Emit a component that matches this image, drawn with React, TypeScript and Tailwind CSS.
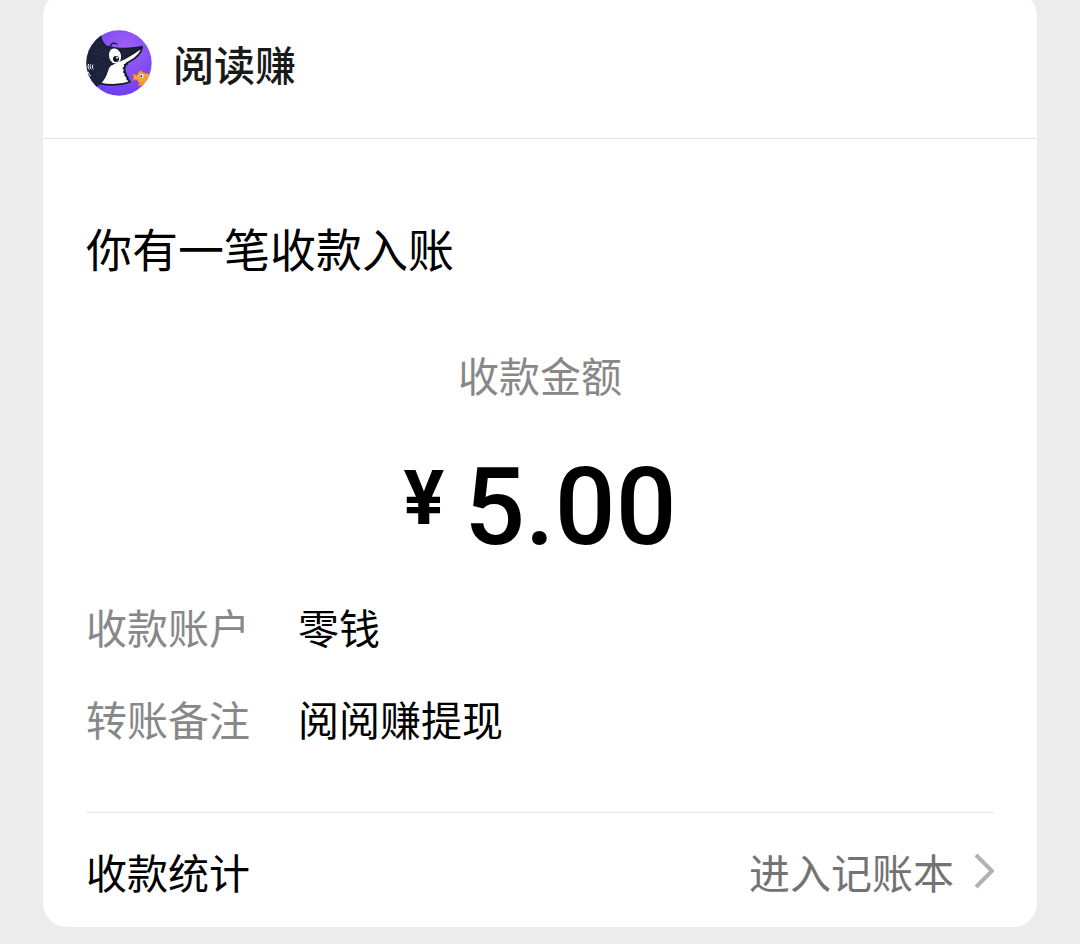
const details = [
  { label: "收款账户", value: "零钱" },
  { label: "转账备注", value: "阅阅赚提现" },
];

function Avatar() {
  return (
    <svg viewBox="24 20 198 198" className="size-[66px] shrink-0" aria-hidden="true">
      <defs>
        <radialGradient id="avatarBg" cx="60%" cy="30%" r="70%">
          <stop offset="0" stopColor="#9f62f4" />
          <stop offset="1" stopColor="#6f3df4" />
        </radialGradient>
        <clipPath id="avatarClip">
          <circle cx="123" cy="119" r="98" />
        </clipPath>
      </defs>
      <g clipPath="url(#avatarClip)">
        <rect x="24" y="20" width="198" height="198" fill="url(#avatarBg)" />
        {/* white face, lip and lower jaw */}
        <path
          d="M64 180C74 160 78 138 94 124C125 116 160 96 192 72C190 90 174 104 156 114C140 122 136 132 140 144C144 158 148 168 156 176C128 186 92 186 64 180Z"
          fill="#fff"
          stroke="#13182b"
          strokeWidth="5"
          strokeLinejoin="round"
        />
        {/* dark head and upper snout */}
        <path
          d="M20 20H66C68 42 72 58 86 68C116 78 156 76 193 69C190 75 184 79 178 82C162 90 144 98 130 108C118 117 106 122 98 126C87 136 88 156 76 170C70 180 62 184 54 190L20 180Z"
          fill="#1b2239"
          stroke="#13182b"
          strokeWidth="3"
          strokeLinejoin="round"
        />
        <path d="M98 70C98 60 106 56 117 62" fill="none" stroke="#13182b" strokeWidth="4" strokeLinecap="round" />
        {/* teeth */}
        <path
          d="M148 116L147 124L140 124L143 131L136 134L141 140L137 146L144 150L141 156L150 161L147 167L156 174"
          fill="none"
          stroke="#13182b"
          strokeWidth="4"
        />
        {/* eye */}
        <ellipse cx="111" cy="98" rx="18" ry="23" fill="#fff" transform="rotate(-14 111 98)" />
        <circle cx="114" cy="107" r="9" fill="#10152a" />
        <circle cx="117" cy="103" r="3" fill="#fff" />
        {/* gills and skin lines */}
        <path
          d="M32 122C29 128 30 134 34 139M38 123C35 128 36 134 40 138M45 124C42 129 43 134 46 138M30 145C32 151 34 155 39 158"
          fill="none"
          stroke="#fff"
          strokeWidth="3"
        />
        <path
          d="M48 78C60 76 72 80 80 90M44 92C58 88 70 94 76 104M54 108C64 104 72 108 78 116M58 158C60 146 68 138 76 136M66 164C68 154 72 148 78 146M70 72C78 76 84 82 88 90"
          fill="none"
          stroke="#323b58"
          strokeWidth="2"
        />
        {/* fish */}
        <path
          d="M163 153C168 152 173 154 177 156C178 150 184 147 187 141C192 145 198 150 207 151L216 152L213 174L203 178C201 184 195 188 180 187C184 183 184 180 181 175C177 169 174 168 162 171C167 166 169 162 163 153Z"
          fill="#f8a23a"
          stroke="#d56a3c"
          strokeWidth="2"
          strokeLinejoin="round"
        />
        <path d="M184 177C187 182 194 180 198 178M202 164L210 168" fill="none" stroke="#d56a3c" strokeWidth="2" />
        <circle cx="191" cy="158" r="6" fill="#fff" />
        <circle cx="190" cy="159" r="3" fill="#13182b" />
      </g>
    </svg>
  );
}

export default function App() {
  return (
    <div className="min-h-screen overflow-hidden bg-[#ececec] px-[43px] pb-4 font-['Noto_Sans_CJK_SC',sans-serif] text-[41px] leading-[60px] text-black">
      <main className="-mt-2 rounded-3xl bg-white">
        <header className="flex items-center gap-[21px] border-b border-[#e5e5e5] px-[43px] pt-[38px] pb-[42px]">
          <Avatar />
          <h1 className="font-medium text-[#191919]">阅读赚</h1>
        </header>

        <div className="px-[43px]">
          <section className="pt-[78px] pb-16">
            <h2 className="text-[46px]">你有一笔收款入账</h2>
            <p className="mt-[67px] text-center text-[#888888]">收款金额</p>
            <p className="mt-[50px] flex items-start justify-center gap-5 font-[Roboto,sans-serif] font-medium">
              <span className="text-[76px] leading-[88px] font-bold">¥</span>
              <span className="text-[107px] leading-[108px]">5.00</span>
            </p>
            <dl className="mt-[34px] grid grid-cols-[auto_1fr] gap-x-12 gap-y-8">
              {details.map((item) => (
                <div key={item.label} className="contents">
                  <dt className="text-[#888888]">{item.label}</dt>
                  <dd>{item.value}</dd>
                </div>
              ))}
            </dl>
          </section>

          <footer className="flex items-center justify-between border-t border-[#e5e5e5] pt-7 pb-[26px]">
            <span>收款统计</span>
            <a href="#ledger" className="flex items-center gap-5 text-[#737373]">
              进入记账本
              <svg viewBox="0 0 20 36" className="h-9 w-5" fill="none" stroke="#b2b2b2" strokeWidth="4" aria-hidden="true">
                <path d="M2 2L18 18L2 34" />
              </svg>
            </a>
          </footer>
        </div>
      </main>
    </div>
  );
}
